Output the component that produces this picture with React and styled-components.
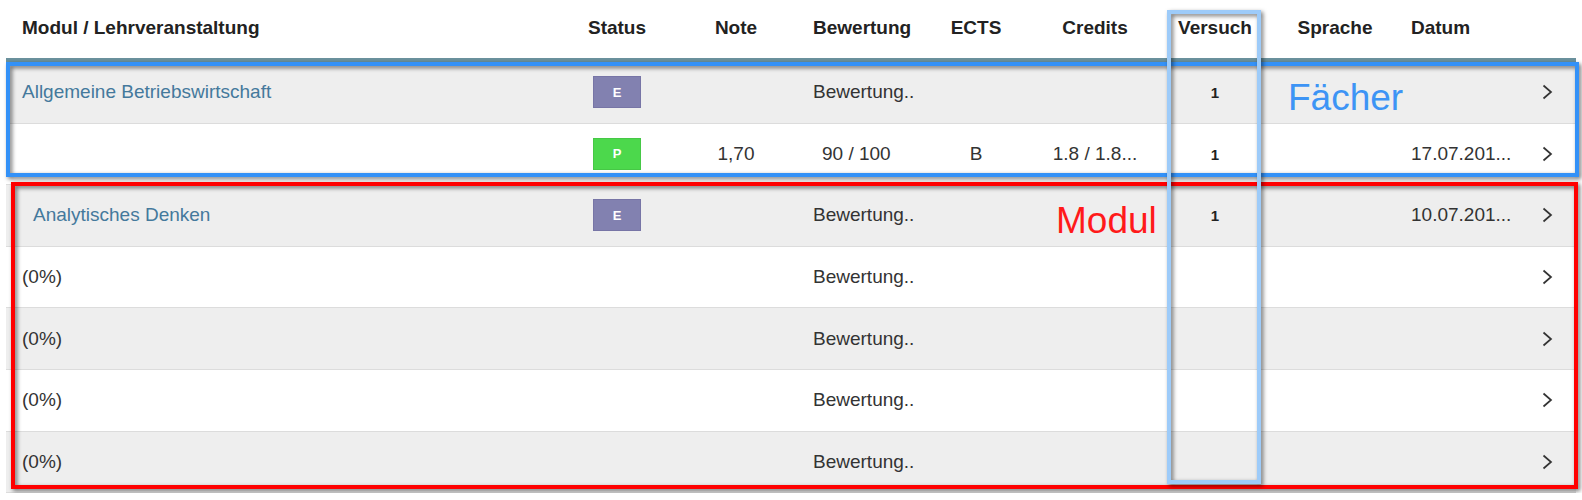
import React from 'react';
import styled, { createGlobalStyle } from 'styled-components';

const GlobalStyle = createGlobalStyle`
  html, body {
    margin: 0;
    padding: 0;
    background: #fff;
  }
  body {
    font-family: "Liberation Sans", Arial, sans-serif;
    font-size: 19px;
    color: #333;
  }
`;

const COLUMNS = '561px 100px 138px 116px 110px 128px 112px 128px 120px 57px';

const rows = [
  { name: 'Allgemeine Betriebswirtschaft', link: true, status: 'E', bewertung: 'Bewertung..', versuch: '1' },
  { status: 'P', note: '1,70', bewertung: '90 / 100', shifted: true, ects: 'B', credits: '1.8 / 1.8...', versuch: '1', datum: '17.07.201...' },
  { name: 'Analytisches Denken', link: true, indent: true, status: 'E', bewertung: 'Bewertung..', versuch: '1', datum: '10.07.201...' },
  { name: '(0%)', bewertung: 'Bewertung..' },
  { name: '(0%)', bewertung: 'Bewertung..' },
  { name: '(0%)', bewertung: 'Bewertung..' },
  { name: '(0%)', bewertung: 'Bewertung..' },
];

const Page = styled.div`
  position: relative;
  padding-left: 6px;
  width: 1570px;
`;

const Table = styled.div`
  display: flex;
  flex-direction: column;
`;

const HeaderRow = styled.div`
  display: grid;
  grid-template-columns: ${COLUMNS};
  align-items: center;
  height: 62px;
  padding-bottom: 3px;
  box-sizing: border-box;
  border-bottom: 4px solid #6a919d;
`;

const HeadCell = styled.div`
  font-weight: bold;
  color: #222;
  text-align: ${(p) => p.$align || 'center'};
  padding-left: ${(p) => p.$pad || 0}px;
`;

const Row = styled.div`
  display: grid;
  grid-template-columns: ${COLUMNS};
  align-items: center;
  height: 61.6px;
  box-sizing: border-box;
  border-bottom: 1px solid #dcdcdc;
  background: ${(p) => (p.$striped ? '#eeeeee' : '#ffffff')};
`;

const Cell = styled.div`
  text-align: ${(p) => p.$align || 'center'};
  padding-left: ${(p) => p.$pad || 0}px;
  white-space: nowrap;
`;

const NameText = styled.span`
  color: ${(p) => (p.$link ? '#44799c' : '#333')};
`;

const Badge = styled.span`
  display: inline-flex;
  align-items: center;
  justify-content: center;
  width: 48px;
  height: 32px;
  box-sizing: border-box;
  font-size: 13px;
  font-weight: bold;
  color: #fff;
  background: ${(p) => (p.$kind === 'P' ? '#4cd84c' : '#8281b0')};
  border: 1px solid ${(p) => (p.$kind === 'P' ? '#46c846' : '#7775a6')};
`;

const Try = styled.span`
  font-size: 15px;
  font-weight: bold;
  color: #222;
`;

const Chevron = styled.svg`
  display: block;
  margin: 0 auto;
`;

const Frame = styled.div`
  position: absolute;
  left: ${(p) => p.$left}px;
  top: ${(p) => p.$top}px;
  width: ${(p) => p.$width}px;
  height: ${(p) => p.$height}px;
  box-sizing: border-box;
  border: 4px solid ${(p) => p.$color};
  filter: drop-shadow(2px 2px 2px rgba(0, 0, 0, 0.55));
  pointer-events: none;
`;

const Label = styled.div`
  position: absolute;
  left: ${(p) => p.$left}px;
  top: ${(p) => p.$top}px;
  font-size: 37px;
  line-height: 37px;
  color: ${(p) => p.$color};
`;

const ChevronIcon = () => (
  <Chevron width="11" height="16" viewBox="0 0 11 16">
    <polyline points="1.5,1.5 9,8 1.5,14.5" fill="none" stroke="#333" strokeWidth="1.7" />
  </Chevron>
);

const App = () => (
  <>
    <GlobalStyle />
    <Page>
      <Table>
        <HeaderRow>
          <HeadCell $align="left" $pad={16}>Modul / Lehrveranstaltung</HeadCell>
          <HeadCell>Status</HeadCell>
          <HeadCell>Note</HeadCell>
          <HeadCell $align="left" $pad={8}>Bewertung</HeadCell>
          <HeadCell>ECTS</HeadCell>
          <HeadCell>Credits</HeadCell>
          <HeadCell>Versuch</HeadCell>
          <HeadCell>Sprache</HeadCell>
          <HeadCell $align="left" $pad={12}>Datum</HeadCell>
          <HeadCell />
        </HeaderRow>
        {rows.map((r, i) => (
          <Row key={i} $striped={i % 2 === 0}>
            <Cell $align="left" $pad={r.indent ? 27 : 16}>
              <NameText $link={r.link}>{r.name}</NameText>
            </Cell>
            <Cell>{r.status && <Badge $kind={r.status}>{r.status}</Badge>}</Cell>
            <Cell>{r.note}</Cell>
            <Cell $align="left" $pad={r.shifted ? 17 : 8}>{r.bewertung}</Cell>
            <Cell>{r.ects}</Cell>
            <Cell>{r.credits}</Cell>
            <Cell>{r.versuch && <Try>{r.versuch}</Try>}</Cell>
            <Cell />
            <Cell $align="left" $pad={12}>{r.datum}</Cell>
            <Cell><ChevronIcon /></Cell>
          </Row>
        ))}
      </Table>

      <Frame $left={6} $top={62} $width={1573} $height={115} $color="#3391f7" />
      <Frame $left={11} $top={182} $width={1567} $height={307} $color="#ff0000" />
      <Frame $left={1167} $top={10} $width={94} $height={474} $color="#9dcbf9" />
      <Label $left={1288} $top={79} $color="#3d94f5">Fächer</Label>
      <Label $left={1056} $top={202} $color="#ff1a1a">Modul</Label>
    </Page>
  </>
);

export default App;
